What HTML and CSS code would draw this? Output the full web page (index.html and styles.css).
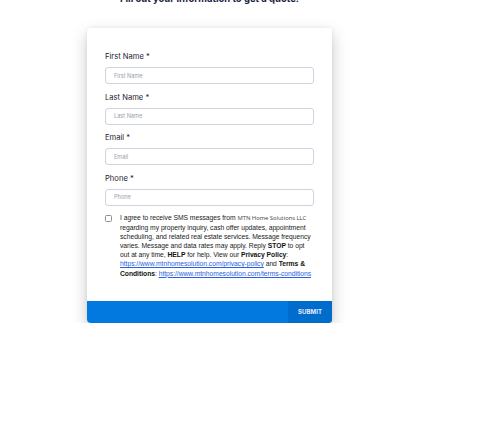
FILE: index.html
```html
<!DOCTYPE html>
<html lang="en">
<head>
  <meta charset="UTF-8" />
  <title>Get a Quote</title>
  <link rel="stylesheet" href="styles.css">
</head>
<body>

<div class="page">
  <h2 class="intro">Fill out your information to get a quote.</h2>

  <form class="card">
    <div class="fields">
      <div class="field">
        <label>First Name *</label>
        <input type="text" placeholder="First Name" />
      </div>
      <div class="field">
        <label>Last Name *</label>
        <input type="text" placeholder="Last Name" />
      </div>
      <div class="field">
        <label>Email *</label>
        <input type="email" placeholder="Email" />
      </div>
      <div class="field">
        <label>Phone *</label>
        <input type="tel" placeholder="Phone" />
      </div>

      <div class="consent">
        <span class="box"></span>
        <p>
          I agree to receive SMS messages from <span class="brand">MTN Home Solutions LLC</span>
          regarding my property inquiry, cash offer updates, appointment scheduling, and related real estate services.
          Message frequency varies. Message and data rates may apply. Reply <b>STOP</b> to opt out at any time,
          <b>HELP</b> for help. View our <b>Privacy Policy</b>:
          <a href="#">https://www.mtnhomesolution.com/privacy-policy</a> and <b>Terms &amp; Conditions</b>:
          <a href="#">https://www.mtnhomesolution.com/terms-conditions</a>
        </p>
      </div>
    </div>

    <div class="footer">
      <button type="button" class="submit">SUBMIT</button>
    </div>
  </form>
</div>

</body>
</html>
```

FILE: styles.css
```css
* {
  margin: 0;
  padding: 0;
  box-sizing: border-box;
}

html, body {
  background: #fff;
  font-family: 'Inter', 'Liberation Sans', sans-serif;
  overflow: hidden;
}

.page {
  width: 245px;
  margin-left: 87px;
}

.intro {
  margin-top: -7px;
  height: 12px;
  font-size: 9.5px;
  line-height: 12px;
  font-weight: 700;
  color: #1b2340;
  text-align: center;
  white-space: nowrap;
}

.card {
  margin-top: 23px;
  background: #fff;
  border-radius: 4px;
  box-shadow: 0 6px 16px rgba(0, 0, 0, 0.22), 0 0 4px rgba(0, 0, 0, 0.06);
  overflow: hidden;
}

.fields {
  padding: 24px 18px 23px 18px;
}

.field {
  display: flex;
  flex-direction: column;
  margin-bottom: 8.5px;
}

.field label {
  font-size: 7.6px;
  line-height: 10px;
  color: #1f2330;
  margin-bottom: 5px;
}

.field input {
  height: 17px;
  width: 100%;
  border: 1px solid #cfd3df;
  border-radius: 3px;
  padding: 0 8px;
  font-family: 'Inter', 'Liberation Sans', sans-serif;
  font-size: 5.6px;
  color: #333;
  outline: none;
}

.field input::placeholder {
  color: #9a9ea8;
}

.consent {
  display: flex;
  gap: 8px;
  margin-top: -1px;
}

.consent .box {
  flex: none;
  width: 7px;
  height: 7px;
  margin-top: 1.5px;
  border: 1px solid #8a8f99;
  border-radius: 1.5px;
}

.consent p {
  font-family: 'Liberation Sans', Arial, sans-serif;
  font-size: 6.75px;
  letter-spacing: -0.03px;
  line-height: 9.1px;
  color: #222;
}

.consent .brand {
  font-family: 'Open Sans', sans-serif;
  font-size: 5.9px;
  color: #444;
}

.consent b {
  color: #111;
}

.consent a {
  color: #2a5fe0;
}

.footer {
  display: flex;
  justify-content: flex-end;
  height: 22px;
  background: #0279df;
}

.submit {
  width: 44px;
  border: none;
  background: #006dcd;
  color: #e9ecff;
  font-family: 'Inter', 'Liberation Sans', sans-serif;
  font-size: 6px;
  font-weight: 700;
  letter-spacing: 0.1px;
  cursor: pointer;
}
```
